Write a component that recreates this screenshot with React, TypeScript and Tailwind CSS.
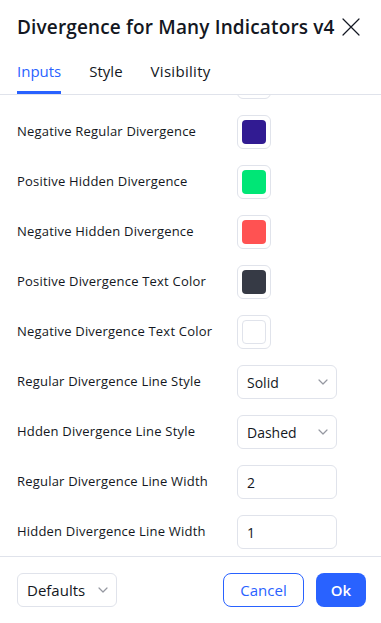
import React from "react";

const font = { fontFamily: "'Open Sans', 'Noto Sans', sans-serif" };

const Chevron = () => (
  <svg width="10" height="6" viewBox="0 0 10 6" fill="none" className="shrink-0">
    <path d="M1 1l4 4 4-4" stroke="#9598a1" strokeWidth="1.2" strokeLinecap="round" strokeLinejoin="round" />
  </svg>
);

type Row =
  | { label: string; kind: "color"; color: string }
  | { label: string; kind: "select"; value: string }
  | { label: string; kind: "input"; value: string };

// first row is scrolled mostly out of view, only its swatch bottom shows
const rows: Row[] = [
  { label: "", kind: "color", color: "#00897b" },
  { label: "Negative Regular Divergence", kind: "color", color: "#311b92" },
  { label: "Positive Hidden Divergence", kind: "color", color: "#00e676" },
  { label: "Negative Hidden Divergence", kind: "color", color: "#ff5252" },
  { label: "Positive Divergence Text Color", kind: "color", color: "#363a45" },
  { label: "Negative Divergence Text Color", kind: "color", color: "#ffffff" },
  { label: "Regular Divergence Line Style", kind: "select", value: "Solid" },
  { label: "Hdden Divergence Line Style", kind: "select", value: "Dashed" },
  { label: "Regular Divergence Line Width", kind: "input", value: "2" },
  { label: "Hidden Divergence Line Width", kind: "input", value: "1" },
];

const Control = ({ row }: { row: Row }) => {
  if (row.kind === "color") {
    return (
      <div className="flex h-[34px] w-[34px] items-center justify-center rounded-md border border-[#e0e3eb] bg-white">
        <div
          className={`h-6 w-6 rounded-[4px] ${row.color === "#ffffff" ? "border border-[#e0e3eb]" : ""}`}
          style={{ backgroundColor: row.color }}
        />
      </div>
    );
  }
  if (row.kind === "select") {
    return (
      <div className="flex h-[34px] w-[100px] items-center justify-between rounded-md border border-[#e0e3eb] pl-[9px] pr-[8px] text-[14px] text-[#131722]">
        <span>{row.value}</span>
        <Chevron />
      </div>
    );
  }
  return (
    <div className="flex h-[34px] w-[100px] items-center rounded-md border border-[#e0e3eb] pl-[9px] text-[14px] text-[#131722]">
      {row.value}
    </div>
  );
};

export default function App() {
  return (
    <div className="flex h-[623px] w-[381px] flex-col overflow-hidden bg-white text-[#131722]" style={font}>
      <div className="flex h-[48px] items-start justify-between pl-[17px] pr-5 pt-[13px]">
        <h1 className="text-[19px] font-semibold leading-[28px] tracking-[0.15px]">
          Divergence for Many Indicators v4
        </h1>
        <svg width="20" height="20" viewBox="0 0 20 20" className="mt-[4px]">
          <path d="M2 2l16 16M18 2L2 18" stroke="#131722" strokeWidth="1.2" strokeLinecap="round" />
        </svg>
      </div>

      <div className="flex h-[47px] gap-7 border-b border-[#e0e3eb] pl-[17px] text-[15px] leading-[20px]">
        <div className="flex items-center border-b-[3px] border-[#2962ff] pt-[3px] text-[#2962ff]">Inputs</div>
        <div className="flex items-center border-b-[3px] border-transparent pt-[3px] text-[#131722]">Style</div>
        <div className="flex items-center border-b-[3px] border-transparent pt-[3px] tracking-[0.3px] text-[#131722]">Visibility</div>
      </div>

      <div className="flex-1 overflow-hidden">
        <div className="-mt-[30px] flex flex-col gap-4 pl-[17px]">
          {rows.map((row, i) => (
            <div key={i} className="flex h-[34px] items-center">
              <div className="w-[220px] text-[13px] tracking-[0.2px] text-[#131722]">{row.label}</div>
              <Control row={row} />
            </div>
          ))}
        </div>
      </div>

      <div className="flex h-[67px] items-center justify-between border-t border-[#e0e3eb] pl-[17px] pr-[15px]">
        <div className="flex h-[34px] w-[100px] items-center justify-between rounded-md border border-[#e0e3eb] pl-[9px] pr-[8px] text-[15px] text-[#131722]">
          <span>Defaults</span>
          <Chevron />
        </div>
        <div className="flex gap-3">
          <button className="flex h-[34px] w-[81px] items-center justify-center rounded-lg border border-[#2962ff] text-[15px] text-[#2962ff]">
            Cancel
          </button>
          <button className="flex h-[34px] w-[50px] items-center justify-center rounded-lg bg-[#2962ff] text-[15px] font-semibold text-white">
            Ok
          </button>
        </div>
      </div>
    </div>
  );
}
